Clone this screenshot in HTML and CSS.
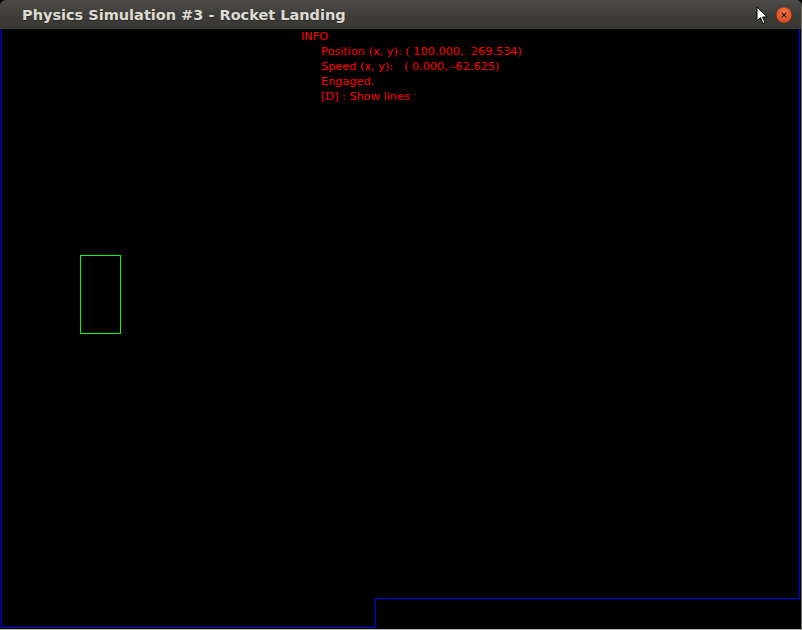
FILE: index.html
```html
<!DOCTYPE html>
<html>
<head>
<meta charset="utf-8">
<link rel="stylesheet" href="styles.css">
</head>
<body>
<div class="window">
  <div class="titlebar">
    <span class="title">Physics Simulation #3 - Rocket Landing</span>
    <div class="controls">
      <svg class="cursor" width="13" height="19" viewBox="0 0 13 19">
        <path d="M1 1 L1 15 L4.5 11.5 L7 17.5 L9 16.6 L6.6 11 L11 11 Z" fill="#fff" stroke="#000" stroke-width="1" stroke-linejoin="round"/>
      </svg>
      <svg class="close" width="18" height="18" viewBox="0 0 18 18">
        <defs>
          <radialGradient id="g" cx="50%" cy="35%" r="60%">
            <stop offset="0" stop-color="#f47a4e"/>
            <stop offset="1" stop-color="#d8481c"/>
          </radialGradient>
        </defs>
        <circle cx="9" cy="9" r="8" fill="url(#g)" stroke="#5a2b18" stroke-width="0.6"/>
        <path d="M6.6 6.6 L11.4 11.4 M11.4 6.6 L6.6 11.4" stroke="#3a1a10" stroke-width="1.2"/>
      </svg>
    </div>
  </div>
  <div class="canvas">
    <svg class="scene" width="800" height="600" viewBox="0 0 800 600">
      <polyline points="1.5,0 1.5,598.5 375.5,598.5 375.5,569.5 799.5,569.5 799.5,0" fill="none" stroke="#0000ff" stroke-width="1"/>
      <rect x="80.5" y="226.5" width="40" height="78" fill="none" stroke="#00ff00" stroke-width="1"/>
    </svg>
    <div class="info">
      <div class="head">INFO</div>
      <div class="line">Position (x, y): ( 100.000,&nbsp; 269.534)</div>
      <div class="line">Speed (x, y):&nbsp;&nbsp; ( 0.000, -62.625)</div>
      <div class="line">Engaged.</div>
      <div class="line">[D] : Show lines</div>
    </div>
  </div>
</div>
</body>
</html>
```

FILE: styles.css
```css
html, body {
  margin: 0;
  padding: 0;
  background: #000;
}
.window {
  width: 802px;
  height: 630px;
  background: #3c3b37;
  display: flex;
  flex-direction: column;
  box-sizing: border-box;
  border-right: 1px solid #6e6d68;
  border-bottom: 1px solid #b5b3ad;
  border-radius: 6px 6px 0 0;
  overflow: hidden;
}
.titlebar {
  height: 29px;
  flex: none;
  display: flex;
  align-items: center;
  justify-content: space-between;
  padding: 0 8px 0 22px;
  background: linear-gradient(#4d4c48, #3c3b37 60%, #3a3935);
}
.title {
  font-family: "DejaVu Sans", sans-serif;
  font-weight: bold;
  font-size: 14.5px;
  color: #dfdbd2;
  text-shadow: 0 1px 0 #2a2926;
}
.controls {
  display: flex;
  align-items: center;
  gap: 6px;
}
.cursor {
  margin-top: 2px;
}
.canvas {
  flex: 1;
  position: relative;
  background: #000;
}
.scene {
  display: block;
}
.info {
  position: absolute;
  left: 301px;
  top: 0;
  font-family: "DejaVu Sans", sans-serif;
  font-size: 11.3px;
  line-height: 15px;
  color: #ff0000;
}
.line {
  padding-left: 20px;
  white-space: pre;
}
```
